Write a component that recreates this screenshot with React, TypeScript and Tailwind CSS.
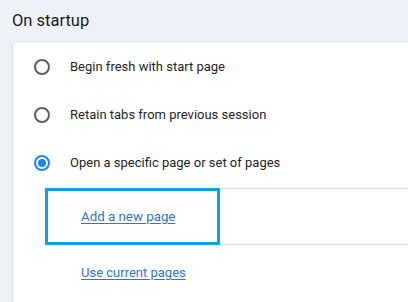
import React from "react";

function Radio({ checked }: { checked?: boolean }) {
  if (checked) {
    return (
      <span className="flex h-[16px] w-[16px] items-center justify-center rounded-full border-2 border-[#1b86ee]">
        <span className="h-[8px] w-[8px] rounded-full bg-[#1b86ee]" />
      </span>
    );
  }
  return <span className="block h-[16px] w-[16px] rounded-full border-2 border-[#5c5f63]" />;
}

function Row({ label, checked }: { label: string; checked?: boolean }) {
  return (
    <div className="flex h-[48px] items-center">
      <div className="flex w-[57px] justify-end pr-[20px]">
        <Radio checked={checked} />
      </div>
      <span className="text-[13px] text-[#1f1f1f]">{label}</span>
    </div>
  );
}

export default function App() {
  return (
    <div
      className="h-[302px] w-[408px] overflow-hidden bg-[#eef2f6]"
      style={{ fontFamily: 'Roboto, "Noto Sans", sans-serif' }}
    >
      <div className="pl-[12px] pt-[7px] text-[16.5px] leading-[28px] text-[#1b1b1b]">On startup</div>
      <div className="ml-[12px] mt-[6px] h-[400px] w-[500px] rounded-tl-[5px] border border-[#dde3ea] bg-white pt-[1px]">
        <Row label="Begin fresh with start page" />
        <Row label="Retain tabs from previous session" />
        <Row label="Open a specific page or set of pages" checked />
        <div className="relative ml-[32px] mt-[1px]">
          <div className="flex h-[56px] items-center border-t border-[#dde3ea] pl-[36px]">
            <a className="text-[13.3px] text-[#2e73d6] underline underline-offset-2" href="#">
              Add a new page
            </a>
          </div>
          <div className="flex h-[56px] items-center border-t border-[#dde3ea] pl-[36px]">
            <a className="text-[13px] text-[#2e73d6] underline underline-offset-2" href="#">
              Use current pages
            </a>
          </div>
          <div className="pointer-events-none absolute left-0 top-0 h-[57px] w-[175px] border-[3px] border-[#0ba3e8]" />
        </div>
      </div>
    </div>
  );
}
